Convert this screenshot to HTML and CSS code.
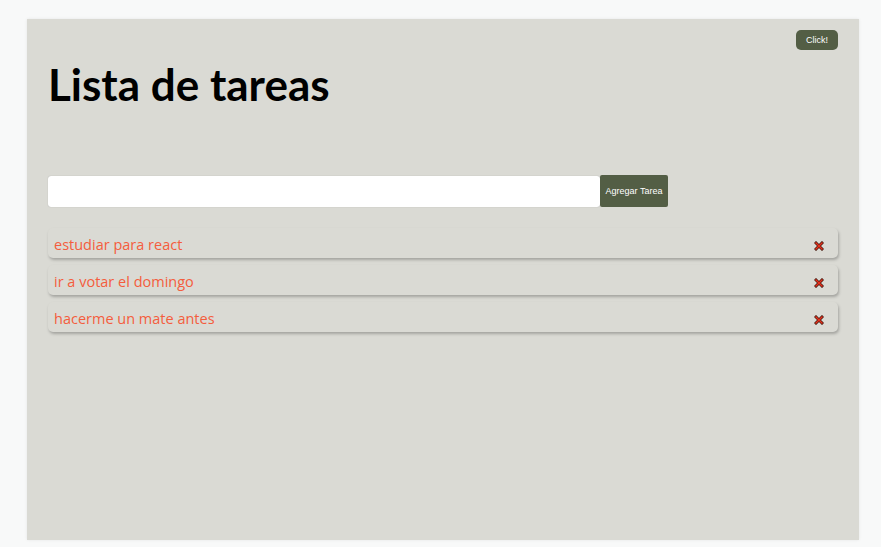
FILE: index.html
```html
<!DOCTYPE html>
<html lang="es">
<head>
<meta charset="utf-8">
<title>Lista de tareas</title>
<link rel="stylesheet" href="styles.css">
</head>
<body>
<div class="app">
  <div class="top">
    <button class="click">Click!</button>
  </div>
  <h1 class="title">Lista de tareas</h1>
  <form class="form">
    <input class="input" type="text">
    <button class="add" type="button">Agregar Tarea</button>
  </form>
  <ul class="list">
    <li class="item"><span class="text">estudiar para react</span><span class="del"><svg width="10" height="10" viewBox="0 0 10 10"><path d="M2 2 L8 8 M8 2 L2 8" stroke="#4a1c12" stroke-width="3" stroke-linecap="square"/><path d="M2 2 L8 8 M8 2 L2 8" stroke="#e8301c" stroke-width="1.4" stroke-linecap="square"/></svg></span></li>
    <li class="item"><span class="text">ir a votar el domingo</span><span class="del"><svg width="10" height="10" viewBox="0 0 10 10"><path d="M2 2 L8 8 M8 2 L2 8" stroke="#4a1c12" stroke-width="3" stroke-linecap="square"/><path d="M2 2 L8 8 M8 2 L2 8" stroke="#e8301c" stroke-width="1.4" stroke-linecap="square"/></svg></span></li>
    <li class="item"><span class="text">hacerme un mate antes</span><span class="del"><svg width="10" height="10" viewBox="0 0 10 10"><path d="M2 2 L8 8 M8 2 L2 8" stroke="#4a1c12" stroke-width="3" stroke-linecap="square"/><path d="M2 2 L8 8 M8 2 L2 8" stroke="#e8301c" stroke-width="1.4" stroke-linecap="square"/></svg></span></li>
  </ul>
</div>
</body>
</html>
```
FILE: styles.css
```css
html, body {
  margin: 0;
  padding: 0;
  background: #f8f9f9;
}
body {
  padding: 19px 22px 7px 27px;
  font-family: "Open Sans", "Noto Sans", sans-serif;
}
.app {
  box-sizing: border-box;
  width: 832px;
  height: 521px;
  background: #dadad4;
  box-shadow: 0 0 3px rgba(0,0,0,0.08);
  padding: 11px 21px 0 21px;
}
.top {
  display: flex;
  justify-content: flex-end;
}
.click {
  background: #535e45;
  color: #fff;
  border: none;
  border-radius: 5px;
  font-family: "Liberation Sans", Arial, sans-serif;
  font-size: 9px;
  height: 20px;
  width: 42px;
  padding: 0;
}
.title {
  margin: 9px 0 0 0;
  font-family: Lato, "Open Sans", sans-serif;
  font-size: 44px;
  line-height: 50px;
  font-weight: 700;
  color: #000;
}
.form {
  display: flex;
  margin-top: 66px;
  align-items: stretch;
}
.input {
  box-sizing: border-box;
  width: 552px;
  height: 31px;
  margin-top: 1px;
  border: none;
  border-radius: 3px;
  background: #fff;
  box-shadow: 0 0 1px rgba(0,0,0,0.3);
}
.add {
  box-sizing: border-box;
  width: 68px;
  height: 32px;
  background: #535e45;
  color: #fff;
  border: none;
  border-radius: 2px;
  font-family: "Liberation Sans", Arial, sans-serif;
  font-size: 9px;
  padding: 0;
}
.list {
  list-style: none;
  margin: 21px 0 0 0;
  padding: 0;
  display: flex;
  flex-direction: column;
  gap: 7px;
}
.item {
  box-sizing: border-box;
  height: 30px;
  display: flex;
  align-items: center;
  justify-content: space-between;
  padding: 0 14px 0 6px;
  border-radius: 5px;
  background: #dadad4;
  box-shadow: 1px 2px 3px rgba(0,0,0,0.25);
  color: #f45d3d;
  font-size: 14.5px;
}
.text {
  padding-top: 3px;
}
.del {
  display: flex;
  margin-top: 6px;
}
```
